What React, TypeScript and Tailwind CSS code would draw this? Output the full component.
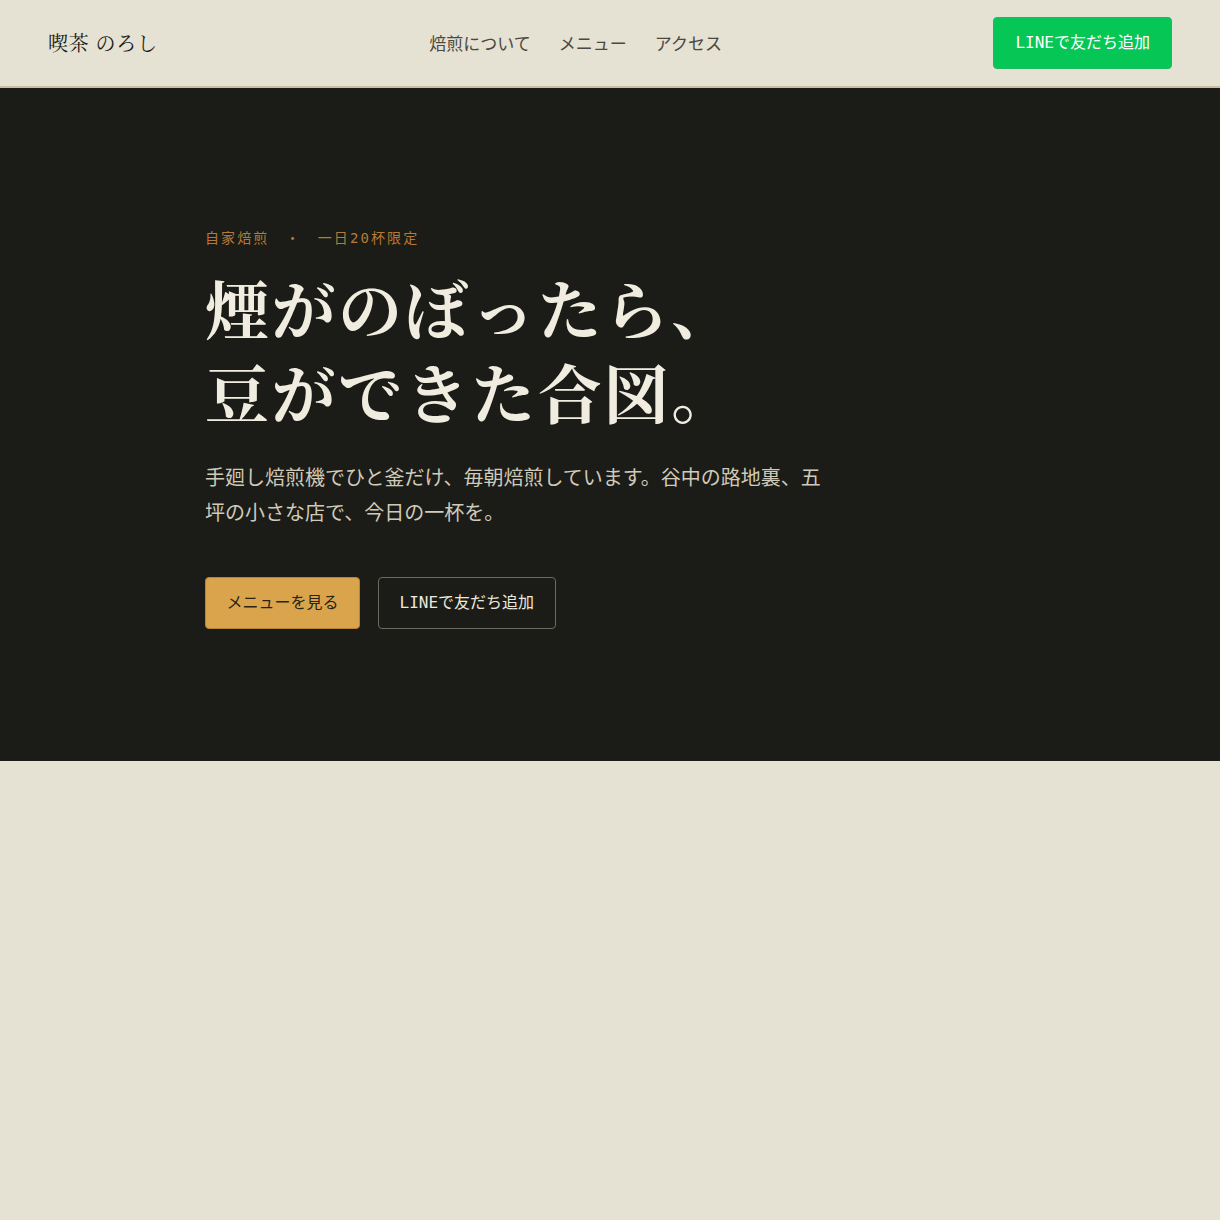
import React from 'react';

const serif = "font-['Liberation_Serif','Noto_Serif_CJK_JP','Noto_Sans_CJK_JP',serif]";
const sans = "font-['DejaVu_Sans_Mono','Noto_Sans_CJK_JP',monospace]";

const App: React.FC = () => {
    return (
        <div className={`min-h-[1220px] bg-[#e5e1d3] ${sans}`}>
            {/* Header */}
            <header className="h-[88px] flex items-center justify-between px-12 border-b-2 border-[#c9bea3] bg-[#e5e1d3]">
                <div className={`mt-[1px] text-[20px] text-[#1b1c17] tracking-[0.04em] ${serif}`}>喫茶 のろし</div>
                <nav className="mt-[3px] flex gap-[28px] text-[17px] text-[#4a4840]">
                    <a>焙煎について</a>
                    <a>メニュー</a>
                    <a>アクセス</a>
                </nav>
                <button className="h-[52px] px-[21px] rounded-[4px] bg-[#06c755] border border-[#1fb85c] text-white text-[16px]">
                    LINEで友だち追加
                </button>
            </header>

            {/* Hero */}
            <section className="bg-[#1b1c17] h-[673px] flex flex-col justify-center pl-[205px] pt-[7px]">
                <p className="text-[14px] tracking-[0.15em] text-[#b67a36]">自家焙煎　・　一日20杯限定</p>
                <h1 className={`mt-[22px] text-[64px] leading-[84px] tracking-[0.04em] font-bold text-[#f0ece0] ${serif}`}>
                    煙がのぼったら、<br />豆ができた合図。
                </h1>
                <p className="mt-[22px] max-w-[625px] text-[20px] leading-[35px] text-[#cfcab9]">
                    手廻し焙煎機でひと釜だけ、毎朝焙煎しています。谷中の路地裏、五坪の小さな店で、今日の一杯を。
                </p>
                <div className="mt-[46px] flex gap-[18px]">
                    <button className="h-[52px] px-[20.5px] rounded-[4px] bg-[#d9a44c] border border-[#b88433] text-[#2a2416] text-[16px]">
                        メニューを見る
                    </button>
                    <button className="h-[52px] px-[20.5px] rounded-[4px] border border-[#6a6a62] text-[#ece8dc] text-[16px]">
                        LINEで友だち追加
                    </button>
                </div>
            </section>
        </div>
    );
};

export default App;
